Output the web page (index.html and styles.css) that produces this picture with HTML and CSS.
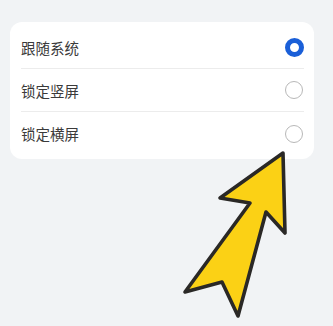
FILE: index.html
```html
<!DOCTYPE html>
<html lang="zh-Hans">
<head>
  <meta charset="UTF-8">
  <title>屏幕方向</title>
  <link rel="stylesheet" href="styles.css">
</head>
<body>
  <div class="card">
    <div class="row">
      <span class="label">跟随系统</span>
      <span class="radio checked"></span>
    </div>
    <div class="row">
      <span class="label">锁定竖屏</span>
      <span class="radio"></span>
    </div>
    <div class="row last">
      <span class="label">锁定横屏</span>
      <span class="radio"></span>
    </div>
  </div>

  <svg class="arrow" width="333" height="326" viewBox="0 0 333 326">
    <polygon points="283,153 220,198 250,203 185,292 222,282 238,316 266,212 285,233"
      fill="#fbd115" stroke="#2a2826" stroke-width="3.6" stroke-linejoin="round"/>
  </svg>
</body>
</html>
```

FILE: styles.css
```css
html, body { margin: 0; padding: 0; }
body {
  background: #f1f3f5;
  font-family: "Noto Sans CJK SC", "Noto Sans", sans-serif;
  width: 333px;
  height: 326px;
  overflow: hidden;
  position: relative;
}
.card {
  margin: 22px 0 0 10px;
  width: 304px;
  background: #fff;
  border-radius: 12px;
  padding: 4px 0;
}
.row {
  height: 43px;
  margin: 0 10px 0 11px;
  display: flex;
  align-items: center;
  justify-content: space-between;
  border-bottom: 1px solid #ececec;
  box-sizing: border-box;
}
.row.last { border-bottom: none; }
.label {
  font-size: 14.5px;
  color: #3a3a3a;
}
.radio {
  width: 18px;
  height: 18px;
  border-radius: 50%;
  border: 1.3px solid #b8b8b8;
  box-sizing: border-box;
  margin-right: 1px;
}
.radio.checked {
  width: 19px;
  height: 19px;
  border: 5.5px solid #1a5fd8;
  margin-right: 0.5px;
}
.arrow {
  position: absolute;
  left: 0;
  top: 0;
}
```
